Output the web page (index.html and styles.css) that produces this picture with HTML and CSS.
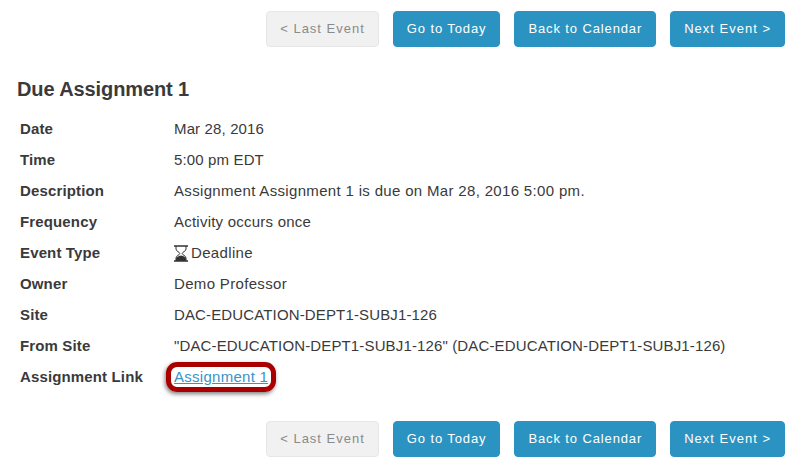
FILE: index.html
```html
<!DOCTYPE html>
<html>
  <head>
    <title>Due Assignment 1</title>
    <link rel="stylesheet" href="styles.css">
  </head>
  <body>
    <div class="nav">
      <a class="btn disabled">&lt; Last Event</a>
      <a class="btn tight">Go to Today</a>
      <a class="btn tight">Back to Calendar</a>
      <a class="btn">Next Event &gt;</a>
    </div>
    <h3 class="title">Due Assignment 1</h3>
    <table class="details">
      <tr><th>Date</th><td>Mar 28, 2016</td></tr>
      <tr><th>Time</th><td>5:00 pm EDT</td></tr>
      <tr><th>Description</th><td class="wide">Assignment Assignment 1 is due on Mar 28, 2016 5:00 pm.</td></tr>
      <tr><th>Frequency</th><td class="mid">Activity occurs once</td></tr>
      <tr>
        <th>Event Type</th>
        <td>
          <svg class="hourglass" width="14" height="17" viewBox="0 0 14 17">
            <path d="M0 1h14M0 16h14" stroke="#333" stroke-width="1.600" fill="none"/>
            <path d="M2 1v3c0 2.400 3.800 3 3.800 4.500S2 10.600 2 13v3M12 1v3c0 2.400-3.800 3-3.800 4.500S12 10.600 12 13v3" stroke="#333" stroke-width="1" fill="none"/>
            <path d="M2 16v-2.500c0-1 2.400-2.500 5-3 2.600.5 5 2 5 3V16z" fill="#333"/>
          </svg><span class="type">Deadline</span>
        </td>
      </tr>
      <tr><th>Owner</th><td class="wide">Demo Professor</td></tr>
      <tr><th>Site</th><td>DAC-EDUCATION-DEPT1-SUBJ1-126</td></tr>
      <tr><th>From Site</th><td>"DAC-EDUCATION-DEPT1-SUBJ1-126" (DAC-EDUCATION-DEPT1-SUBJ1-126)</td></tr>
      <tr>
        <th>Assignment Link</th>
        <td><a class="link" href="#">Assignment 1<span class="callout"></span></a></td>
      </tr>
    </table>
    <div class="nav nav-bottom">
      <a class="btn disabled">&lt; Last Event</a>
      <a class="btn tight">Go to Today</a>
      <a class="btn tight">Back to Calendar</a>
      <a class="btn">Next Event &gt;</a>
    </div>
  </body>
</html>
```
FILE: styles.css
```css
body {
  margin: 0;
  padding: 11px 17px 0;
  font-family: "Liberation Sans", Arial, sans-serif;
  font-size: 15px;
  letter-spacing: 0.14px;
  color: #3a3a3a;
  background: #fff;
}

.nav {
  display: flex;
  justify-content: flex-end;
  gap: 14px;
}

.nav-bottom {
  margin-top: 29px;
}

.btn {
  height: 36px;
  line-height: 34px;
  padding: 0 13px;
  border: 1px solid #2b93c1;
  border-radius: 4px;
  background: #2b93c1;
  color: #fff;
  font-size: 13px;
  letter-spacing: 1px;
  box-sizing: border-box;
}

.btn.tight {
  letter-spacing: 0.88px;
}

.btn.disabled {
  background: #f1f1f1;
  border-color: #e6e6e6;
  color: #8a8a8a;
}

.title {
  margin: 31px 0 0;
  font-size: 20px;
  line-height: 22px;
  letter-spacing: -0.1px;
  font-weight: bold;
}

.details {
  border-collapse: collapse;
  margin-top: 13px;
}

.details th,
.details td {
  height: 31px;
  padding: 0 3px;
  text-align: left;
  vertical-align: middle;
}

.details th {
  width: 148px;
  font-weight: bold;
}

.details td.wide {
  letter-spacing: 0.33px;
}

.details td.mid {
  letter-spacing: 0.23px;
}

.hourglass {
  vertical-align: -4px;
  margin-right: 3px;
}

.type {
  letter-spacing: 0.35px;
}

.link {
  position: relative;
  color: #3a93c8;
  letter-spacing: 0.27px;
}

.callout {
  position: absolute;
  left: -8px;
  right: -8px;
  top: -6px;
  bottom: -7px;
  border: 5px solid #a80000;
  border-radius: 11px;
  box-shadow: -1px 2px 4px rgba(0, 0, 0, 0.5);
}
```
